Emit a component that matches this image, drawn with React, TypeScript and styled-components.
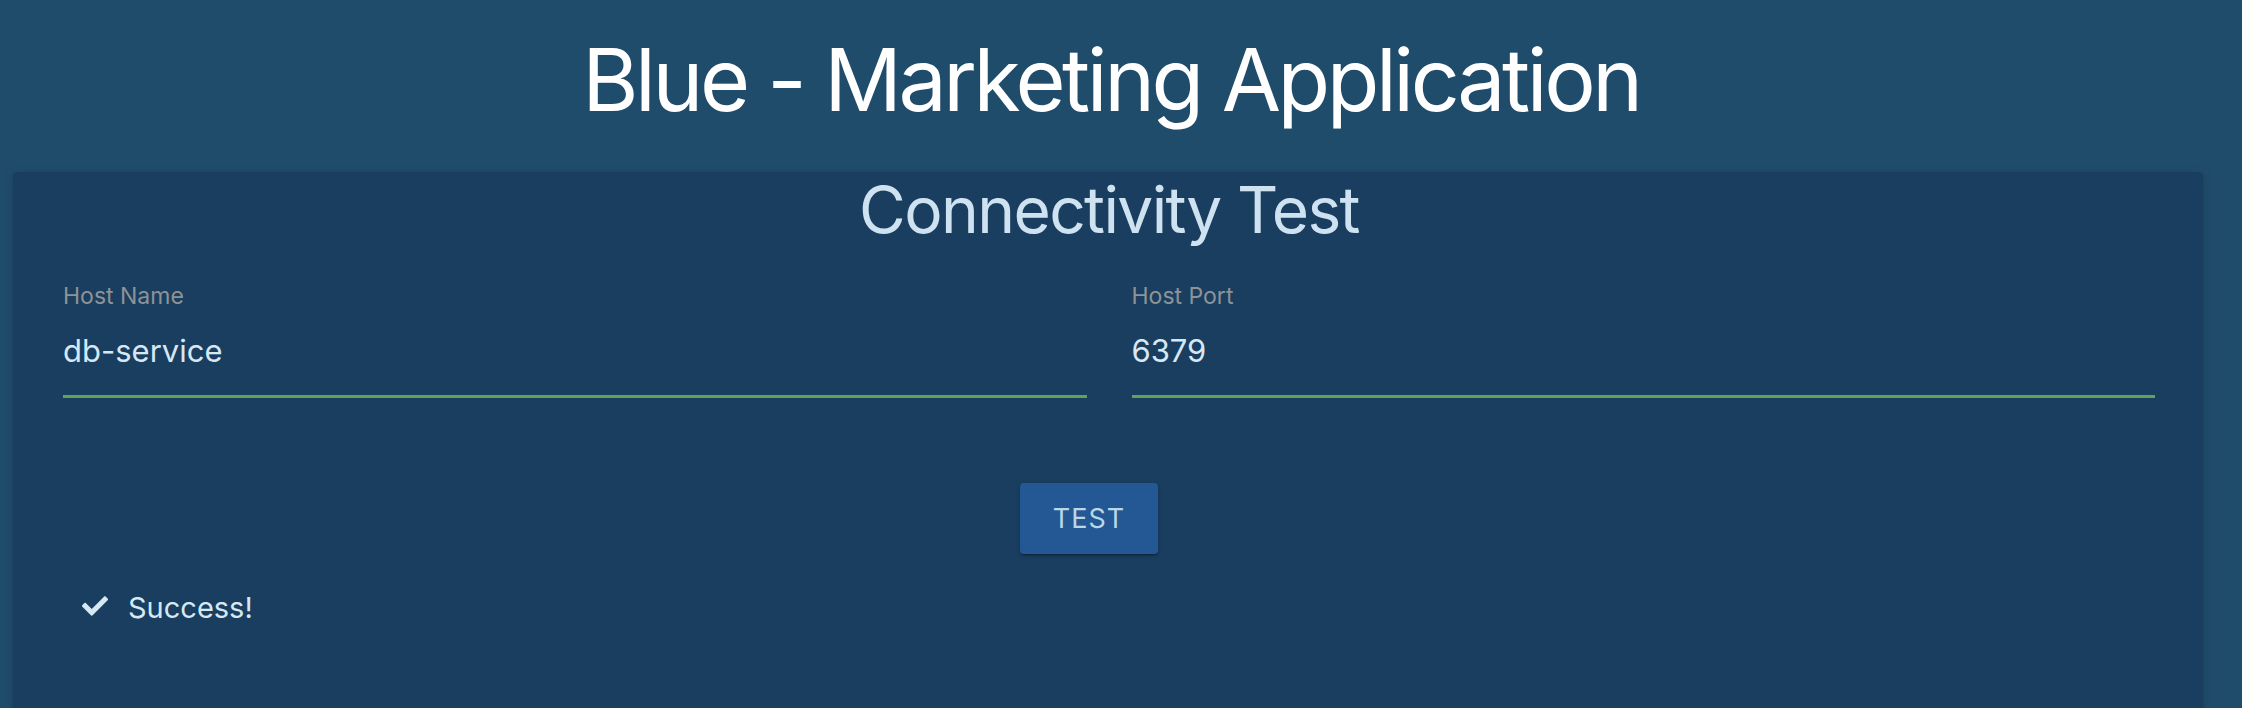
import styled, { createGlobalStyle } from "styled-components";
import { FaCheck } from "react-icons/fa";

const GlobalStyle = createGlobalStyle`
  html, body {
    margin: 0;
    padding: 0;
    overflow: hidden;
    background: #204c6b;
    font-family: Inter, "Noto Sans", "Liberation Sans", sans-serif;
  }
`;

export default function App() {
  return (
    <>
      <GlobalStyle />
      <Page>
        <Header>
          <Title>Blue - Marketing Application</Title>
        </Header>
        <Card>
          <CardTitle>Connectivity Test</CardTitle>
          <Fields>
            <Field label="Host Name" value="db-service" />
            <Field label="Host Port" value="6379" />
          </Fields>
          <Actions>
            <TestButton type="button">TEST</TestButton>
          </Actions>
          <Status>
            <FaCheck size={26} />
            <span>Success!</span>
          </Status>
        </Card>
      </Page>
    </>
  );
}

function Field({ label, value }: { label: string; value: string }) {
  return (
    <FieldBox>
      <Label>{label}</Label>
      <Value>{value}</Value>
    </FieldBox>
  );
}

const Page = styled.div`
  min-height: 100vh;
  display: flex;
  flex-direction: column;
`;

const Header = styled.header`
  padding: 37px 20px 49px 0;
  display: flex;
  justify-content: center;
`;

const Title = styled.h1`
  margin: 0;
  font-size: 86px;
  line-height: 1;
  font-weight: 400;
  letter-spacing: -0.04em;
  color: #ffffff;
`;

const Card = styled.main`
  margin: 0 39px 0 13px;
  padding: 6px 48px 140px 50px;
  background: #193e5f;
  border-radius: 4px;
  box-shadow: 0 2px 10px rgba(0, 0, 0, 0.18);
`;

const CardTitle = styled.h2`
  margin: 0 0 43px;
  text-align: center;
  font-size: 64px;
  line-height: 1;
  font-weight: 400;
  letter-spacing: -0.025em;
  color: #cfe2f1;
`;

const Fields = styled.div`
  display: grid;
  grid-template-columns: 1fr 1fr;
  column-gap: 45px;
`;

const FieldBox = styled.div`
  display: flex;
  flex-direction: column;
  border-bottom: 3px solid #5ea358;
`;

const Label = styled.label`
  font-size: 23px;
  line-height: 1;
  color: #8d9397;
  margin-bottom: 27px;
`;

const Value = styled.div`
  font-size: 31px;
  line-height: 1;
  color: #d6e8f4;
  padding-bottom: 29px;
`;

const Actions = styled.div`
  display: flex;
  justify-content: center;
  padding: 85px 40px 0 0;
`;

const TestButton = styled.button`
  border: 0;
  border-radius: 4px;
  padding: 22px 33px;
  background: #245894;
  color: #b9d7e6;
  font-family: inherit;
  font-size: 27px;
  line-height: 1;
  letter-spacing: 1px;
  box-shadow: 0 3px 1px -2px rgba(0, 0, 0, 0.2), 0 2px 2px 0 rgba(0, 0, 0, 0.14),
    0 1px 5px 0 rgba(0, 0, 0, 0.12);
  cursor: pointer;
`;

const Status = styled.div`
  display: flex;
  align-items: center;
  gap: 20px;
  margin-top: 39px;
  padding-left: 19px;
  font-size: 29px;
  line-height: 1;
  color: #d6e8f4;

  svg {
    color: #d6e8f4;
    margin-top: -4px;
  }
`;
